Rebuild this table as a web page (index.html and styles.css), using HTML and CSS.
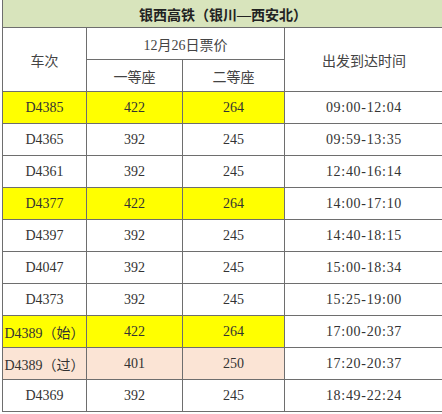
FILE: index.html
```html
<!DOCTYPE html>
<html lang="zh">
<head>
<meta charset="utf-8">
<link rel="stylesheet" href="styles.css">
</head>
<body>
<table class="fares">
  <colgroup>
    <col class="c1"><col class="c2"><col class="c3"><col class="c4">
  </colgroup>
  <tr class="title-row"><td colspan="4" class="title">银西高铁（银川—西安北）</td></tr>
  <tr class="head"><td rowspan="2">车次</td><td colspan="2">12月26日票价</td><td rowspan="2">出发到达时间</td></tr>
  <tr class="head"><td>一等座</td><td>二等座</td></tr>
  <tr class="row hl"><td>D4385</td><td>422</td><td>264</td><td>09:00-12:04</td></tr>
  <tr class="row"><td>D4365</td><td>392</td><td>245</td><td>09:59-13:35</td></tr>
  <tr class="row"><td>D4361</td><td>392</td><td>245</td><td>12:40-16:14</td></tr>
  <tr class="row hl"><td>D4377</td><td>422</td><td>264</td><td>14:00-17:10</td></tr>
  <tr class="row"><td>D4397</td><td>392</td><td>245</td><td>14:40-18:15</td></tr>
  <tr class="row"><td>D4047</td><td>392</td><td>245</td><td>15:00-18:34</td></tr>
  <tr class="row"><td>D4373</td><td>392</td><td>245</td><td>15:25-19:00</td></tr>
  <tr class="row hl"><td>D4389（始）</td><td>422</td><td>264</td><td>17:00-20:37</td></tr>
  <tr class="row"><td class="pe">D4389（过）</td><td class="pe">401</td><td class="pe">250</td><td>17:20-20:37</td></tr>
  <tr class="row"><td>D4369</td><td>392</td><td>245</td><td>18:49-22:24</td></tr>
</table>
</body>
</html>
```
FILE: styles.css
```css
html, body {
  margin: 0;
  padding: 0;
  background: #ffffff;
  overflow: hidden;
}
.fares {
  margin-left: 2px;
  width: 442px;
  border-collapse: collapse;
  table-layout: fixed;
  font-family: "Liberation Serif", "Noto Sans CJK SC", serif;
  font-size: 14px;
  color: #333333;
}
.c1 { width: 84px; }
.c2 { width: 96px; }
.c3 { width: 102px; }
.fares td {
  border: 1px solid #6e6e6e;
  height: 31px;
  padding: 0;
  text-align: center;
  vertical-align: middle;
  white-space: nowrap;
  overflow: hidden;
}
.fares .title-row td {
  height: 27px;
  border-top: none;
}
.title {
  background: #d8e4bc;
  font-weight: bold;
  color: #222222;
}
.head td {
  color: #444444;
}
.row td:nth-child(4) {
  letter-spacing: 0.7px;
}
.hl td:nth-child(-n+3) {
  background: #ffff00;
}
.pe {
  background: #fbe4d5;
}
```
